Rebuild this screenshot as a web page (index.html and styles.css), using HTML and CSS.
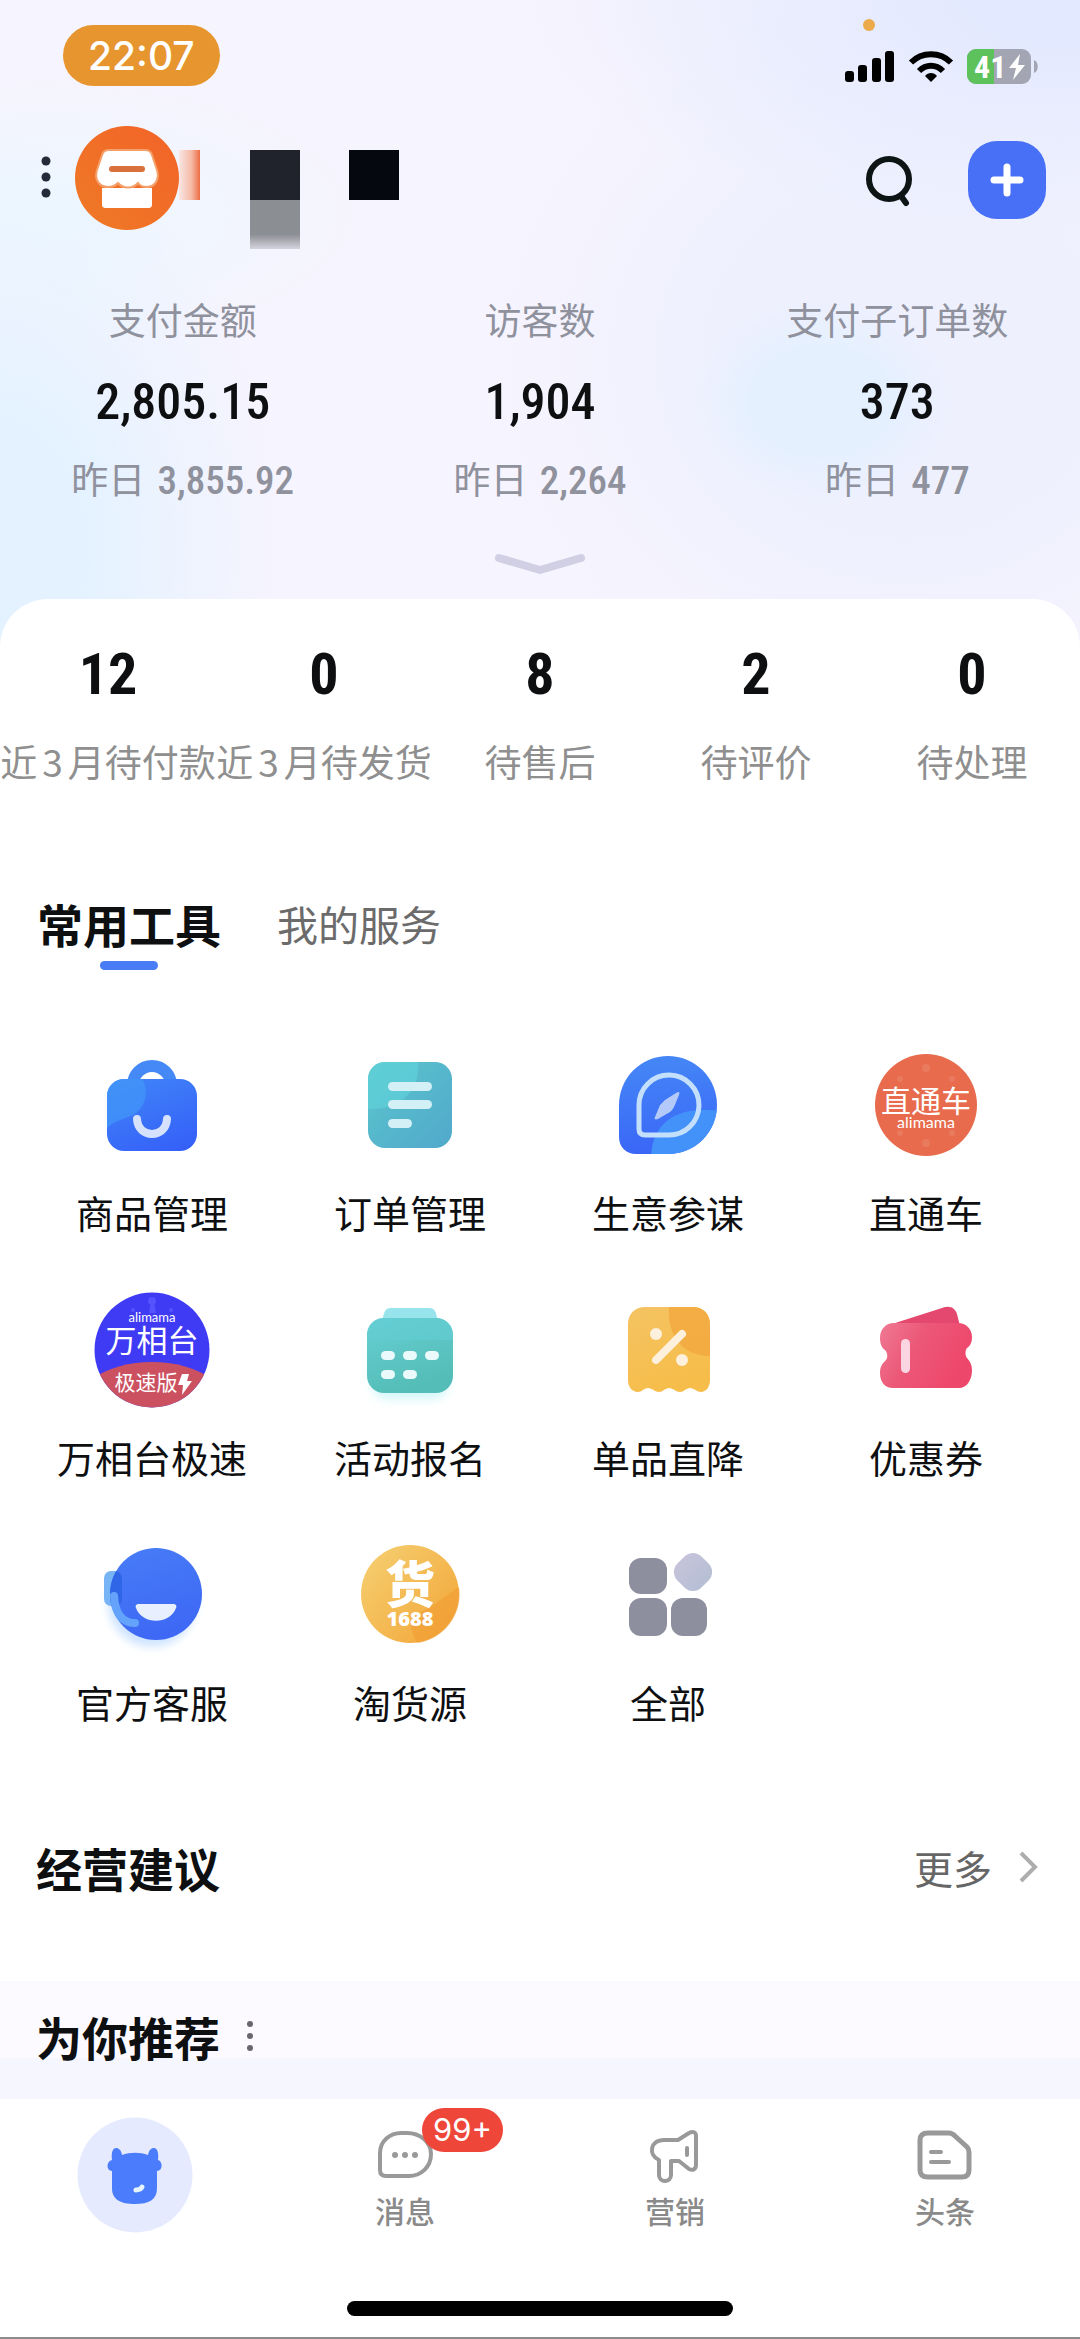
FILE: index.html
```html
<!DOCTYPE html>
<html lang="zh-CN">
<head>
<meta charset="utf-8">
<meta name="viewport" content="width=device-width, initial-scale=1">
<title>工作台</title>
<link rel="stylesheet" href="styles.css">
</head>
<body>
<header class="hero">
  <div class="status">
    <span class="clock">22:07</span>
    <span class="mic-dot"></span>
    <div class="status-icons">
      <svg width="50" height="32" viewBox="0 0 50 32"><rect x="0" y="20" width="9" height="11" rx="3"/><rect x="13" y="14" width="9" height="17" rx="3"/><rect x="27" y="7" width="9" height="24" rx="3"/><rect x="40" y="0" width="9" height="31" rx="3"/></svg>
      <svg width="44" height="32" viewBox="0 0 44 32"><path d="M22 31l-6-6c3-4 9-4 12 0z"/><path d="M10 20c7-7 17-7 24 0" fill="none" stroke="#000" stroke-width="6"/><path d="M2 11.500C13 .5 31 .5 42 11.500" fill="none" stroke="#000" stroke-width="6"/></svg>
      <svg width="72" height="35" viewBox="0 0 72 35"><defs><clipPath id="bat"><rect width="64" height="35" rx="9"/></clipPath></defs><g clip-path="url(#bat)"><rect width="64" height="35" fill="#a3a5b2"/><rect width="27" height="35" fill="#5ec25c"/></g><path d="M67 11c5 2 5 11 0 13z" fill="#a3a5b2"/><text x="7" y="29" class="battery-text">41</text><path d="M53 5L42 19h7l-3 12 12-15h-7z" fill="#fff"/></svg>
    </div>
  </div>

  <div class="topbar">
    <button class="icon-btn" aria-label="菜单"><svg width="12" height="48" viewBox="0 0 12 48" fill="#242a38"><circle cx="6" cy="7" r="4.500"/><circle cx="6" cy="23" r="4.500"/><circle cx="6" cy="39" r="4.500"/></svg></button>
    <svg class="avatar" width="104" height="104" viewBox="0 0 104 104">
      <defs><linearGradient id="av" x1="0" y1="1" x2="1" y2="0"><stop offset="0" stop-color="#ef7a26"/><stop offset="1" stop-color="#f26328"/></linearGradient></defs>
      <circle cx="52" cy="52" r="52" fill="url(#av)"/>
      <path d="M27 62h50v16c0 3-1 4-4 4H31c-3 0-4-1-4-4z" fill="#fff"/>
      <path d="M34 24h36c4 0 6 1 7 5l5 15c3 9-2 17-10 17-4 0-7-1-9-4-5 6-15 6-20 0-3 3-6 4-10 4-9 0-14-8-11-17l5-15c1-4 3-5 7-5z" fill="#fff" stroke="#f5a06a" stroke-width="2"/>
      <rect x="34" y="40" width="36" height="6" rx="3" fill="#d9713c"/>
    </svg>
    <svg class="shop-mask" width="221" height="104" viewBox="0 0 221 104">
      <defs><linearGradient id="m1"><stop offset="0" stop-color="#f9e6e4"/><stop offset=".6" stop-color="#f6b9a4"/><stop offset="1" stop-color="#ee6c44"/></linearGradient><linearGradient id="m2" x2="0" y2="1"><stop offset=".7" stop-color="#8b8e92"/><stop offset="1" stop-color="#d5d3df"/></linearGradient></defs>
      <rect y="24" width="21" height="50" fill="url(#m1)"/><rect x="71" y="24" width="50" height="50" fill="#20232b"/><rect x="71" y="74" width="50" height="49" fill="url(#m2)"/><rect x="170" y="24" width="50" height="50" fill="#05080e"/>
    </svg>
    <button class="icon-btn search" aria-label="搜索"><svg width="48" height="56" viewBox="0 0 48 56" fill="none" stroke="#0d1414" stroke-width="6"><circle cx="24" cy="27" r="20"/><path d="M36 44l5 7" stroke-linecap="round"/></svg></button>
    <button class="add" aria-label="新增"><svg width="34" height="34" viewBox="0 0 34 34" stroke="#fff" stroke-width="7" stroke-linecap="round"><path d="M17 4v26M4 17h26"/></svg></button>
  </div>

  <dl class="stats">
    <div class="stat"><dt>支付金额</dt><dd class="stat-value">2,805.15</dd><dd class="stat-sub">昨日 <span class="num">3,855.92</span></dd></div>
    <div class="stat"><dt>访客数</dt><dd class="stat-value">1,904</dd><dd class="stat-sub">昨日 <span class="num">2,264</span></dd></div>
    <div class="stat"><dt>支付子订单数</dt><dd class="stat-value">373</dd><dd class="stat-sub">昨日 <span class="num">477</span></dd></div>
  </dl>
  <button class="icon-btn expand" aria-label="展开"><svg width="92" height="24" viewBox="0 0 92 24" fill="none" stroke="#d0cfe3" stroke-width="8" stroke-linecap="round" stroke-linejoin="round"><path d="M5 6l41 12L87 6"/></svg></button>
</header>

<main class="sheet">
  <ul class="orders">
    <li><b>12</b><span>近<i>3</i>月待付款</span></li>
    <li><b>0</b><span>近<i>3</i>月待发货</span></li>
    <li><b>8</b><span>待售后</span></li>
    <li><b>2</b><span>待评价</span></li>
    <li><b>0</b><span>待处理</span></li>
  </ul>

  <nav class="tabs">
    <button class="tab tab-active">常用工具</button>
    <button class="tab">我的服务</button>
  </nav>

  <div class="tools">
    <a class="tool" href="#"><svg viewBox="0 0 120 120">
      <defs><linearGradient id="bag" x1=".3" y1="0" x2=".8" y2="1"><stop offset="0" stop-color="#3f82f8"/><stop offset="1" stop-color="#3560f8"/></linearGradient><clipPath id="bagc"><rect x="15" y="34" width="90" height="72" rx="17"/></clipPath></defs>
      <path d="M41 40a19 19 0 0 1 38 0" fill="none" stroke="#4489f5" stroke-width="12"/>
      <rect x="15" y="34" width="90" height="72" rx="17" fill="url(#bag)"/>
      <path d="M15 34h35c7 10 5 28-9 36-10 4-18 6-26 13z" fill="#4195f8" opacity=".75" clip-path="url(#bagc)"/>
      <path d="M45 74c1 20 29 20 30 0" fill="none" stroke="#d6e2fd" stroke-width="8" stroke-linecap="round"/></svg><span>商品管理</span></a>

    <a class="tool" href="#"><svg viewBox="0 0 120 120">
      <defs><linearGradient id="doc" x2="1" y2="1"><stop offset="0" stop-color="#5bc6cd"/><stop offset="1" stop-color="#51a8cb"/></linearGradient><clipPath id="docc"><rect x="18" y="17" width="84" height="86" rx="17"/></clipPath></defs>
      <rect x="18" y="17" width="84" height="86" rx="17" fill="url(#doc)"/>
      <path d="M18 17h50c3 28-17 48-50 47z" fill="#5fd2d8" opacity=".7" clip-path="url(#docc)"/>
      <g fill="#d3f0f7"><rect x="38" y="37" width="44" height="9" rx="4.500"/><rect x="38" y="55" width="44" height="9" rx="4.500"/><rect x="38" y="74" width="24" height="9" rx="4.500"/></g></svg><span>订单管理</span></a>

    <a class="tool" href="#"><svg viewBox="0 0 120 120">
      <defs><linearGradient id="cmp" x1=".2" y1="0" x2=".3" y2="1"><stop offset="0" stop-color="#4588f6"/><stop offset="1" stop-color="#3a66f7"/></linearGradient><clipPath id="cmpc"><path d="M11 60a49 49 0 1 1 49 49H28c-10 0-17-7-17-17z"/></clipPath></defs>
      <path d="M11 60a49 49 0 1 1 49 49H28c-10 0-17-7-17-17z" fill="url(#cmp)"/>
      <path d="M43 112c1-36 28-52 70-46v46z" fill="#4292f9" clip-path="url(#cmpc)"/>
      <path d="M31 60a30 30 0 1 1 29 30H37c-4 0-6-2-6-6z" fill="none" stroke="#c3dffc" stroke-width="5"/>
      <path d="M57 55l11-7c3-2 4-1 3 2l-5 12c-1 2-2 3-4 5l-12 7c-3 1-4 0-3-2l5-12z" fill="#b3c9fa"/></svg><span>生意参谋</span></a>

    <a class="tool" href="#"><svg viewBox="0 0 120 120">
      <circle cx="60" cy="60" r="51" fill="#e76b4c"/>
      <g fill="#ea7a5e"><circle cx="60" cy="23" r="4"/><circle cx="34" cy="34" r="3"/><circle cx="86" cy="34" r="3"/><circle cx="34" cy="88" r="3"/><circle cx="86" cy="88" r="3"/><circle cx="60" cy="98" r="4"/></g>
      <text x="60" y="67" class="logo-cn" font-size="30">直通车</text><text x="60" y="83" class="logo-en" font-size="16">alimama</text></svg><span>直通车</span></a>

    <a class="tool" href="#"><svg viewBox="0 0 120 120">
      <defs><clipPath id="wxt"><circle cx="60" cy="60" r="57.500"/></clipPath></defs>
      <g clip-path="url(#wxt)"><rect width="120" height="120" fill="#3f3bf5"/><ellipse cx="60" cy="129" rx="84" ry="57" fill="#cb5160"/></g>
      <g fill="#5553ff"><circle cx="60" cy="11" r="4"/><path d="M59 11h3l2 12h-7z"/><circle cx="41" cy="20" r="2"/><circle cx="79" cy="20" r="2"/></g>
      <text x="60" y="32" class="logo-en" font-size="13">alimama</text><text x="60" y="62" class="logo-cn" font-size="31">万相台</text><text x="54" y="100" class="logo-cn" font-size="21">极速版</text><path d="M90 84h7l-2 7h5l-10 14 1-10h-5z" fill="#fff"/></svg><span>万相台极速</span></a>

    <a class="tool" href="#"><svg viewBox="0 0 120 120">
      <defs><linearGradient id="cal" x2=".4" y2="1"><stop offset="0" stop-color="#65cfd3"/><stop offset="1" stop-color="#55bdb7"/></linearGradient><filter id="soft" x="-30%" y="-30%" width="160%" height="160%"><feGaussianBlur stdDeviation="4"/></filter></defs>
      <rect x="21" y="50" width="78" height="60" rx="17" fill="#bdf3f5" opacity=".6" filter="url(#soft)"/>
      <path d="M32 36c1-14 3-18 9-18h38c6 0 8 4 9 18z" fill="#98e4ec"/>
      <rect x="17" y="28" width="86" height="75" rx="17" fill="url(#cal)"/><path d="M17 50v-5c0-10 7-17 17-17h52c10 0 17 7 17 17v5z" fill="#62cdd4" opacity=".6"/>
      <g fill="#eafafa"><rect x="31" y="61" width="14" height="9" rx="4.500"/><rect x="53" y="61" width="14" height="9" rx="4.500"/><rect x="75" y="61" width="14" height="9" rx="4.500"/><rect x="31" y="80" width="14" height="9" rx="4.500"/><rect x="53" y="80" width="14" height="9" rx="4.500"/></g></svg><span>活动报名</span></a>

    <a class="tool" href="#"><svg viewBox="0 0 120 120">
      <defs><linearGradient id="dis" x2=".4" y2="1"><stop offset="0" stop-color="#f4c363"/><stop offset="1" stop-color="#f6bd4a"/></linearGradient></defs>
      <path d="M20 34c0-10 7-17 17-17h48c10 0 17 7 17 17v56c0 7-4 12-9 12-4 0-7-4-11-4s-6 4-10 4-7-4-11-4-6 4-10 4-7-4-11-4-6 4-10 4c-6 0-10-5-10-12z" fill="url(#dis)"/>
      <path d="M61 17h24c10 0 17 7 17 17v32c-27 0-43-20-41-49z" fill="#f2a73f" opacity=".8"/>
      <g fill="#fdf1dd"><circle cx="48" cy="44" r="6"/><circle cx="74" cy="70" r="6"/></g><path d="M48 70l26-26" stroke="#fdf1dd" stroke-width="8" stroke-linecap="round"/></svg><span>单品直降</span></a>

    <a class="tool" href="#"><svg viewBox="0 0 120 120">
      <defs><linearGradient id="tic" x2="1" y2=".4"><stop offset="0" stop-color="#ef7a94"/><stop offset=".45" stop-color="#ec5878"/><stop offset="1" stop-color="#ee476c"/></linearGradient></defs>
      <path d="M26 34l50-16c8-3 13 0 15 6l3 12z" fill="#e4486e"/>
      <path d="M28 33h64c8 0 14 6 14 14 0 6-2 9-5 11-2 2-2 8 0 10 3 3 5 7 5 12 0 10-5 18-13 18H27c-8 0-13-6-13-15 0-6 2-9 5-12 3-2 3-8 0-11-3-2-5-6-5-12 0-9 6-15 14-15z" fill="url(#tic)"/>
      <rect x="35" y="49" width="9" height="34" rx="4.500" fill="#fcd5e2"/></svg><span>优惠券</span></a>

    <a class="tool" href="#"><svg viewBox="0 0 120 120">
      <defs><linearGradient id="srv" x1=".3" y1="0" x2=".6" y2="1"><stop offset="0" stop-color="#477bf6"/><stop offset="1" stop-color="#3d67f5"/></linearGradient><clipPath id="face"><circle cx="64" cy="59" r="46"/></clipPath></defs>
      <circle cx="60" cy="68" r="44" fill="#cfe4ff" filter="url(#soft)"/>
      <rect x="12" y="36" width="18" height="35" rx="7" fill="#76b4f6"/><circle cx="64" cy="59" r="46" fill="url(#srv)"/>
      <rect x="12" y="36" width="18" height="35" rx="7" fill="#2f66e8" clip-path="url(#face)"/>
      <path d="M22 61c1 17 8 27 21 27" fill="none" stroke="#64a3fb" stroke-width="8" stroke-linecap="round"/>
      <path d="M47 69h34c3 0 4 2 3 4-6 17-34 17-40 0-1-2 0-4 3-4z" fill="#e8effe"/></svg><span>官方客服</span></a>

    <a class="tool" href="#"><svg viewBox="0 0 120 120">
      <defs><linearGradient id="hy" x1=".1" y1=".2" x2=".9" y2=".9"><stop offset="0" stop-color="#f5ca6a"/><stop offset="1" stop-color="#f3a93c"/></linearGradient></defs>
      <circle cx="60" cy="59" r="49" fill="url(#hy)"/>
      <path d="M67 108c-9-17-7-25 4-31 16-7 22-16 38-25a49 49 0 0 1-42 56z" fill="#f19e34" opacity=".65"/>
      <text x="60" y="68" class="logo-bold" font-size="50">货</text><text x="60" y="91" class="logo-num" font-size="20">1688</text></svg><span>淘货源</span></a>

    <a class="tool" href="#"><svg viewBox="0 0 120 120">
      <defs><linearGradient id="all" x2="1"><stop offset="0" stop-color="#c5c3da"/><stop offset="1" stop-color="#b6bfd5"/></linearGradient></defs>
      <g fill="#8e8f9e"><rect x="21" y="23" width="38" height="36" rx="12"/><rect x="21" y="63" width="38" height="38" rx="12"/><rect x="63" y="63" width="36" height="38" rx="12"/></g>
      <rect x="68" y="20" width="34" height="34" rx="12" transform="rotate(45 85 37)" fill="url(#all)"/></svg><span>全部</span></a>
  </div>

  <section class="advice">
    <h2>经营建议</h2>
    <a class="more" href="#">更多<svg width="20" height="34" viewBox="0 0 20 34" fill="none" stroke="#adadad" stroke-width="4"><path d="M3 3l14 14L3 31"/></svg></a>
  </section>

  <section class="recommend">
    <h2>为你推荐</h2>
    <svg width="8" height="30" viewBox="0 0 8 30" fill="#67676d"><circle cx="4" cy="3" r="3"/><circle cx="4" cy="15" r="3"/><circle cx="4" cy="27" r="3"/></svg>
  </section>
</main>

<footer class="footer">
  <nav class="tabbar">
    <a class="nav-item nav-home" href="#" aria-label="首页"><svg width="116" height="116" viewBox="0 0 116 116">
      <circle cx="58" cy="58" r="57.500" fill="#e5eaff"/>
      <path d="M35 43c-1-8 1-12 4-12s5 2 6 7c8-3 18-3 26 0 1-5 3-7 6-7s5 4 4 12c5 1 5 11-1 11v17c0 12-8 16-22 16s-23-4-23-16V54c-6 0-6-10 0-11z" fill="#4b7cfb"/>
      <path d="M59 73c3 0 5-1 6-3" fill="none" stroke="#e5f4ff" stroke-width="5" stroke-linecap="round"/></svg></a>
    <a class="nav-item" href="#"><span class="nav-icon"><svg width="56" height="52" viewBox="0 0 56 52" fill="none" stroke="#999" stroke-width="4"><path d="M3 23C3 11 13 3 24 3h6c13 0 24 9 24 21 0 13-10 22-22 22H9c-4 0-6-2-6-6z"/><g fill="#999" stroke="none"><circle cx="18" cy="25" r="3"/><circle cx="28" cy="25" r="3"/><circle cx="38" cy="25" r="3"/></g></svg><em class="badge">99+</em></span>消息</a>
    <a class="nav-item" href="#"><span class="nav-icon"><svg width="56" height="52" viewBox="0 0 56 52" fill="none" stroke="#999" stroke-width="4" stroke-linejoin="round"><path d="M17 10h14l11-7c4-2 7-1 7 3v29c0 4-3 6-7 4l-10-8h-8v14c0 8-12 8-12 0V30C1 25 3 10 17 10z"/><path d="M40 18v7" stroke-linecap="round"/></svg></span>营销</a>
    <a class="nav-item" href="#"><span class="nav-icon"><svg width="56" height="52" viewBox="0 0 56 52" fill="none" stroke="#999" stroke-width="5" stroke-linejoin="round"><path d="M11 3h21c3 0 4 1 6 3l12 11c2 2 2 3 2 5v18c0 5-3 7-7 7H11c-5 0-8-2-8-7V10c0-5 3-7 8-7z"/><path d="M14 22h10M14 32h18" stroke-width="4" stroke-linecap="round"/></svg></span>头条</a>
  </nav>
  <div class="home-bar"></div>
</footer>
</body>
</html>
```
FILE: styles.css
```css
* { box-sizing: border-box; margin: 0; padding: 0; }

body {
  min-height: 100vh;
  display: flex;
  flex-direction: column;
  background: #fff;
  color: #0e0f11;
  font-family: "Noto Sans CJK SC", sans-serif;
}

svg { display: block; flex: none; overflow: visible; }
button { border: 0; background: none; font: inherit; color: inherit; cursor: pointer; }
a { color: inherit; text-decoration: none; }
ul { list-style: none; }

.hero {
  display: flex;
  flex-direction: column;
  padding: 25px 0 71px;
  background:
    radial-gradient(ellipse 130px 100px at 76% 62%, #e4f0fe 0, #e4f0fe 50%, transparent 100%),
    radial-gradient(ellipse 280px 420px at 0 85%, #e4f2ff 30%, transparent 100%),
    radial-gradient(ellipse 330px 140px at 4% 33%, #edf7ff 0, transparent 100%),
    radial-gradient(ellipse 560px 230px at 100% 0, #e3e9fe 20%, transparent 100%),
    radial-gradient(ellipse 420px 380px at 84% 55%, #eef0fe 40%, transparent 100%),
    #f6f4fe;
}

.status {
  position: relative;
  display: flex;
  align-items: flex-end;
  justify-content: space-between;
  padding: 0 41px 0 63px;
}
.clock {
  padding: 0 25px;
  border-radius: 31px;
  background: #e6952f;
  color: #fff;
  font: 500 39px/61px "Inter", sans-serif;
}
.mic-dot {
  position: absolute;
  right: 205px;
  top: -6px;
  width: 12px;
  height: 12px;
  border-radius: 50%;
  background: #edaa4b;
}
.status-icons { display: flex; align-items: center; gap: 14px; padding-bottom: 2px; }
.battery-text { font: 700 32px "Roboto Condensed", "Roboto", sans-serif; fill: #fff; }

.topbar { display: flex; align-items: center; height: 104px; margin-top: 40px; padding: 0 34px 0 40px; }
.avatar { margin-left: 23px; }
.search { margin: 4px 55px 0 auto; }
.add {
  display: grid;
  place-items: center;
  width: 78px;
  height: 78px;
  margin-top: 4px;
  border-radius: 29px;
  background: #4870f6;
}

.stats { display: grid; grid-template-columns: repeat(3, 1fr); margin-top: 64px; padding: 0 4px; text-align: center; }
.stat { color: #8f919d; font-size: 37px; line-height: 50px; }
.stat-value { margin: 28px 0 21px; color: #0e0f11; font: 500 50px/60px "Roboto Condensed", "Roboto", sans-serif; }
.stat-sub { font-size: 37px; }
.num { margin-left: 4px; font: 500 39px/1 "Roboto Condensed", "Roboto", sans-serif; }
.expand { align-self: center; margin-top: 49px; }

.sheet { margin-top: -48px; padding-top: 40px; border-radius: 48px 48px 0 0; background: #fff; }

.orders { display: grid; grid-template-columns: repeat(5, 1fr); text-align: center; white-space: nowrap; }
.orders li { display: flex; flex-direction: column; align-items: center; gap: 27px; }
.orders b { font: 700 58px/70px "Roboto Condensed", "Roboto", sans-serif; }
.orders span { color: #8f8f8f; font-size: 37px; line-height: 50px; }
.orders i { margin: 0 5px; font-style: normal; }

.tabs { display: flex; gap: 56px; margin-top: 107px; padding: 0 37px; }
.tab { padding-bottom: 17px; color: #6b6b6b; font-size: 41px; line-height: 60px; }
.tab-active { padding: 0; color: #0e0f11; font-size: 46px; font-weight: 700; }
.tab-active::after { content: ""; display: block; width: 58px; height: 9px; margin: 8px auto 0; border-radius: 5px; background: #4a7df5; }

.tools { display: grid; grid-template-columns: repeat(4, 1fr); row-gap: 53px; margin-top: 75px; padding: 0 25px 0 23px; }
.tool { display: flex; flex-direction: column; align-items: center; gap: 22px; font-size: 38px; line-height: 50px; }
.tool svg { width: 120px; height: 120px; }
.tool text { text-anchor: middle; fill: #fff; }
.logo-cn { font-family: "Noto Sans CJK SC", sans-serif; font-weight: 400; }
.logo-en { font-family: "Lato", sans-serif; font-weight: 400; }
.logo-bold { font-family: "Noto Sans CJK SC", sans-serif; font-weight: 900; }
.logo-num { font-family: "Open Sans", sans-serif; font-weight: 800; }

h2 { font-size: 46px; font-weight: 700; line-height: 60px; }
.advice { display: flex; align-items: center; justify-content: space-between; margin-top: 110px; padding: 0 42px 0 36px; }
.more { display: flex; align-items: center; gap: 26px; color: #666; font-size: 39px; line-height: 60px; }
.recommend {
  display: flex;
  align-items: center;
  gap: 26px;
  margin-top: 84px;
  padding: 25px 36px 33px;
  background: linear-gradient(#fdfaff 77px, #f5f6fe 77px);
}

.footer {
  display: flex;
  flex: 1;
  flex-direction: column;
  align-items: center;
  justify-content: space-between;
  padding: 18px 0 21px;
  border-bottom: 2px solid #8c8c8c;
  background: #fff;
}
.tabbar { display: grid; grid-template-columns: repeat(4, 1fr); width: 100%; }
.nav-item { display: flex; flex-direction: column; align-items: center; gap: 8px; padding-top: 13px; color: #8a8a8a; font-size: 30px; font-weight: 500; line-height: 40px; }
.nav-home { padding: 0; }
.nav-icon { position: relative; }
.badge {
  position: absolute;
  left: 45px;
  top: -22px;
  width: 81px;
  border-radius: 22px;
  background: #ee4639;
  color: #fff;
  font: 400 31px/44px "Inter", sans-serif;
  text-align: center;
}
.home-bar { width: 386px; height: 15px; border-radius: 8px; background: #000; }
```
